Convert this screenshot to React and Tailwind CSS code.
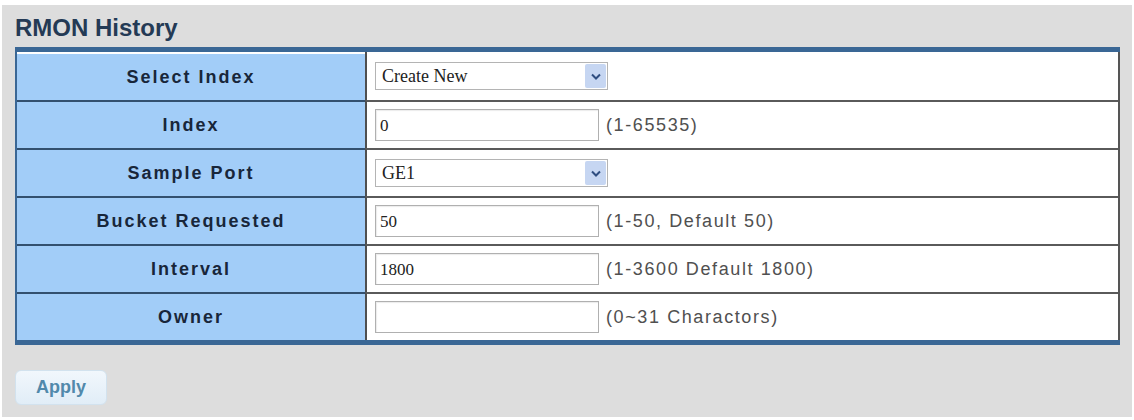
import React from 'react';

const rows = [
  { label: 'Select Index', kind: 'select', value: 'Create New' },
  { label: 'Index', kind: 'input', value: '0', hint: '(1-65535)' },
  { label: 'Sample Port', kind: 'select', value: 'GE1' },
  { label: 'Bucket Requested', kind: 'input', value: '50', hint: '(1-50, Default 50)' },
  { label: 'Interval', kind: 'input', value: '1800', hint: '(1-3600 Default 1800)' },
  { label: 'Owner', kind: 'input', value: '', hint: '(0~31 Charactors)' },
];

const FakeSelect = ({ value }) => (
  <div className="flex h-[28px] w-[233px] items-center border border-[#b4b4b4] bg-white pl-[6px]">
    <span className="flex-1 font-['Liberation_Serif',serif] text-[18px] leading-none text-[#222]">{value}</span>
    <span className="m-[1px] flex h-[24px] w-[21px] items-center justify-center rounded-[2px] bg-[#c6d6f2]">
      <svg width="10" height="7" viewBox="0 0 10 7">
        <path d="M1 1.5 L5 5.5 L9 1.5" fill="none" stroke="#2e4d80" strokeWidth="2" />
      </svg>
    </span>
  </div>
);

const Row = ({ row, first }) => (
  <div className="flex h-[48px]">
    <div
      className={`flex w-[348px] items-center justify-center bg-[#a2cdf8] ${first ? 'h-[46px] self-end' : 'border-t-2 border-[#33506f]'}`}
    >
      <span className="font-['Liberation_Sans',Arial,sans-serif] text-[18px] font-bold tracking-[2px] text-[#18263a]">
        {row.label}
      </span>
    </div>
    <div className={`flex flex-1 items-center border-l-2 border-[#4f4f4f] bg-white pl-[8px] ${first ? '' : 'border-t-2 border-t-[#5a5a5a]'}`}>
      {row.kind === 'select' ? (
        <FakeSelect value={row.value} />
      ) : (
        <>
          <div className="flex h-[32px] w-[224px] items-center border border-[#b0b0b0] bg-white pl-[4px] shadow-[inset_1px_1px_1px_rgba(0,0,0,0.08)]">
            <span className="font-['Liberation_Serif',serif] text-[17px] leading-none text-[#222]">{row.value}</span>
          </div>
          <span className="ml-[7px] font-['Liberation_Sans',Arial,sans-serif] text-[18px] tracking-[1.6px] text-[#505050]">
            {row.hint}
          </span>
        </>
      )}
    </div>
  </div>
);

export default function App() {
  return (
    <div className="h-[420px] w-[1134px] bg-white pt-[5px] pl-[2px]">
      <div className="h-[412px] w-[1130px] bg-[#dddddd] pt-[9px] pl-[13px]">
        <h1 className="h-[33px] font-['Liberation_Sans',Arial,sans-serif] text-[24px] font-bold leading-[28px] text-[#243a55]">
          RMON History
        </h1>
        <div className="w-[1105px] border-t-[5px] border-b-[5px] border-[#3a6795] bg-white">
          <div className="border-l-2 border-r-2 border-l-[#3a6795] border-r-[#555]">
            {rows.map((row, i) => (
              <Row key={row.label} row={row} first={i === 0} />
            ))}
          </div>
        </div>
        <button className="mt-[25px] h-[35px] w-[92px] rounded-[6px] border border-[#d2e2ee] bg-gradient-to-b from-[#f1f7fc] to-[#e1edf7] font-['Liberation_Sans',Arial,sans-serif] text-[18px] font-bold text-[#5189ab]">
          Apply
        </button>
      </div>
    </div>
  );
}
